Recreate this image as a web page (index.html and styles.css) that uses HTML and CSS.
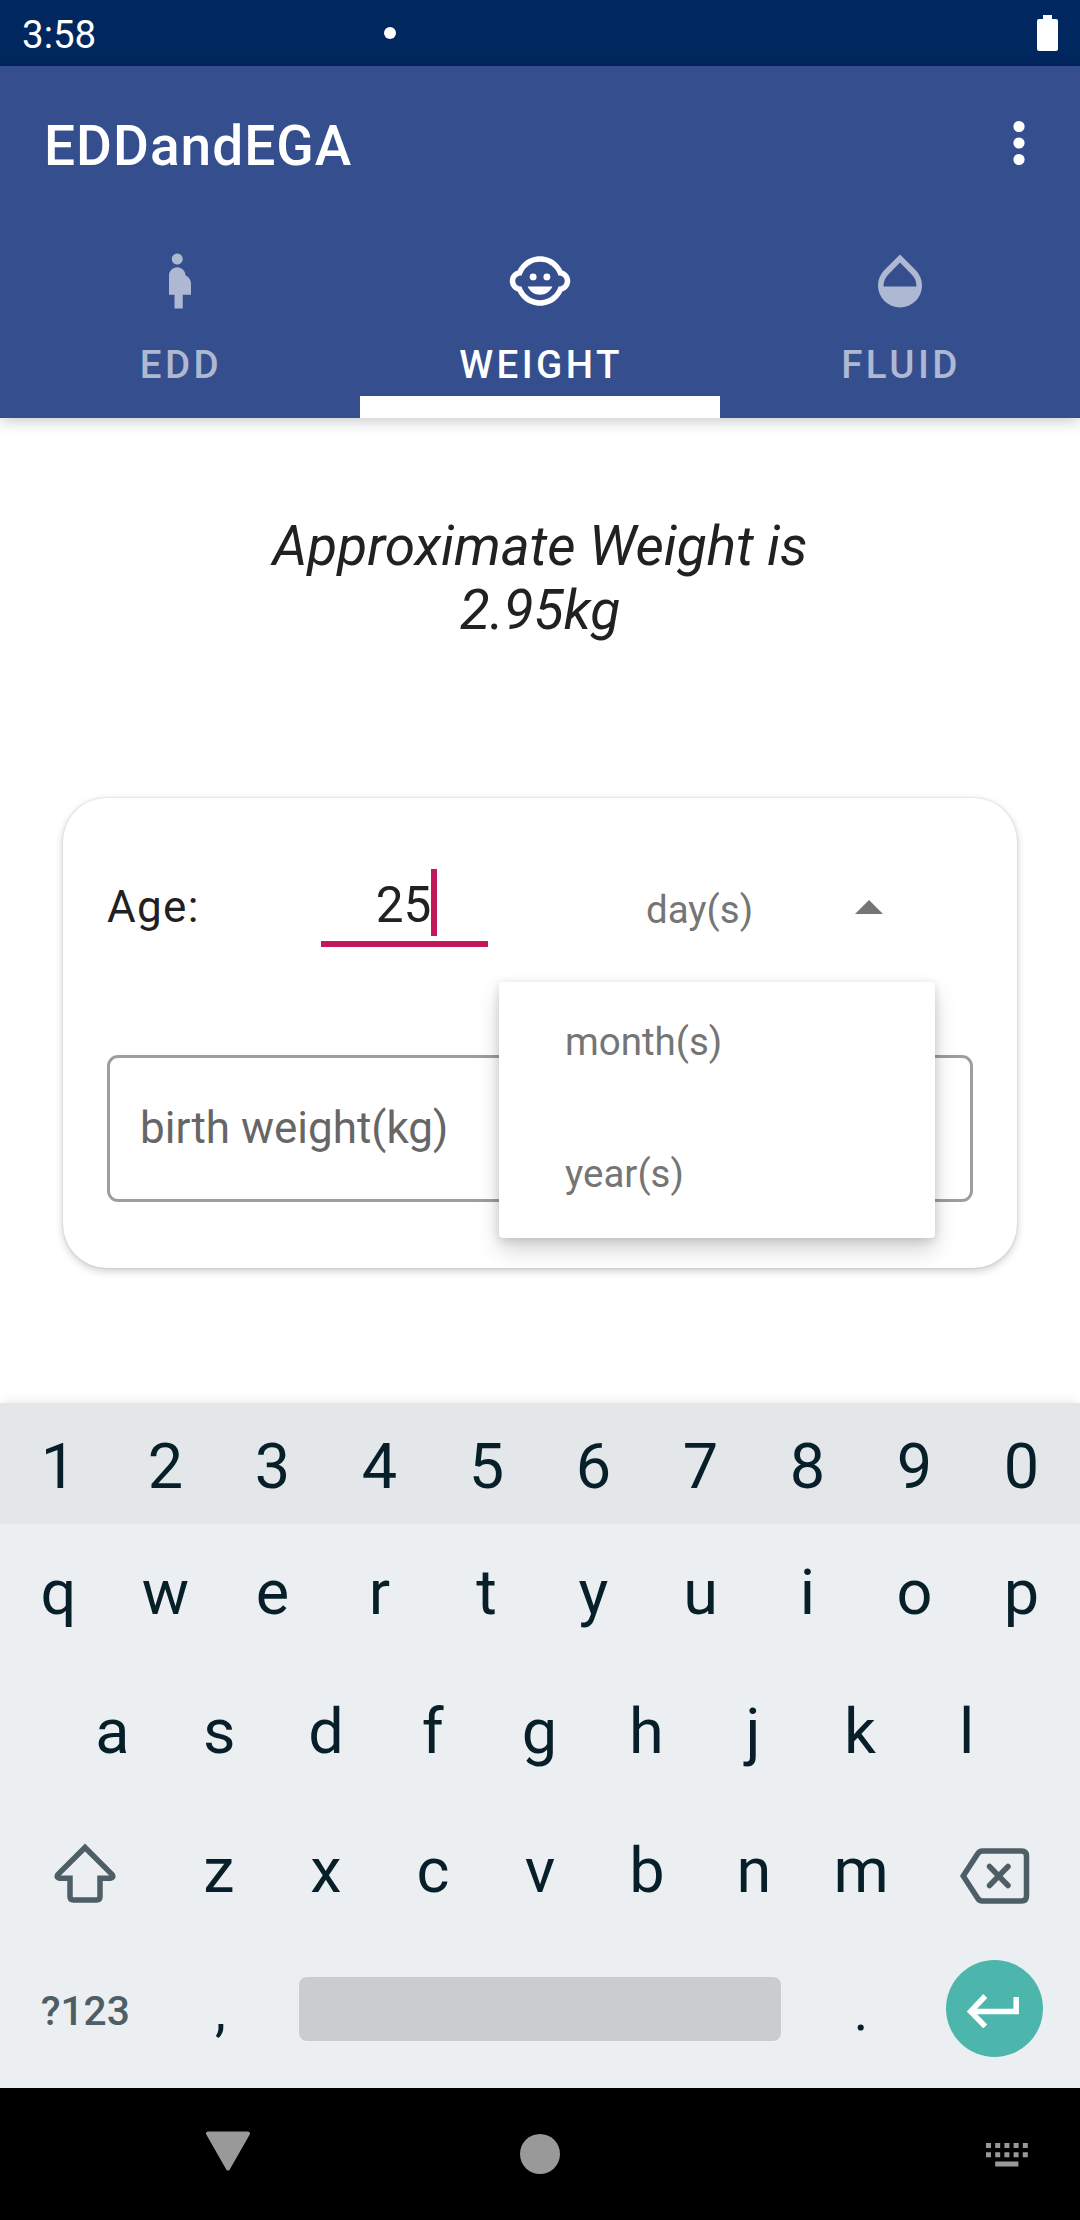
FILE: index.html
```html
<!DOCTYPE html>
<html lang="en">
<head>
<meta charset="utf-8">
<title>EDDandEGA</title>
<link rel="stylesheet" href="styles.css">
</head>
<body>
<div class="screen">
  <div class="status-bar">
    <span class="clock">3:58</span>
    <span class="status-dot"></span>
    <svg class="battery" width="21" height="36" viewBox="0 0 21 36"><path d="M6 0h9v4h4q2 0 2 2v28q0 2-2 2H2q-2 0-2-2V6q0-2 2-2h4z"/></svg>
  </div>

  <header class="app-header">
    <div class="toolbar">
      <h1 class="title">EDDandEGA</h1>
      <svg class="overflow" width="12" height="46" viewBox="0 0 12 46"><circle cx="6" cy="6.5" r="5.6"/><circle cx="6" cy="23" r="5.6"/><circle cx="6" cy="39.5" r="5.6"/></svg>
    </div>
    <nav class="tabs">
      <div class="tab">
        <svg class="tab-icon" viewBox="0 0 24 24"><path d="M9 4c0-1.11.89-2 2-2s2 .89 2 2-.89 2-2 2-2-.89-2-2zM16 13c-.01-1.34-.83-2.51-2-3 0-1.66-1.34-3-3-3s-3 1.34-3 3v7h2v5h3v-5h3v-4z"/></svg>
        <span class="tab-label">EDD</span>
      </div>
      <div class="tab tab-active">
        <svg class="tab-icon" viewBox="0 0 24 24"><circle cx="14.5" cy="10.5" r="1.25"/><circle cx="9.5" cy="10.5" r="1.25"/><path d="M22.94 12.66c.04-.21.06-.43.06-.66s-.02-.45-.06-.66c-.25-1.51-1.36-2.74-2.81-3.17-.53-1.12-1.28-2.1-2.19-2.91C16.36 3.85 14.28 3 12 3s-4.36.85-5.94 2.26c-.92.81-1.67 1.8-2.19 2.91-1.45.43-2.56 1.65-2.81 3.17-.04.21-.06.43-.06.66s.02.45.06.66c.25 1.51 1.36 2.74 2.81 3.17.52 1.11 1.27 2.09 2.17 2.89C7.62 20.14 9.71 21 12 21s4.38-.86 5.97-2.28c.9-.8 1.65-1.79 2.17-2.89 1.44-.43 2.55-1.65 2.8-3.17zM19 14c-.1 0-.19-.02-.29-.03-.2.67-.49 1.29-.86 1.86C16.6 17.74 14.45 19 12 19s-4.6-1.26-5.85-3.17c-.37-.57-.66-1.19-.86-1.86-.1.01-.19.03-.29.03-1.1 0-2-.9-2-2s.9-2 2-2c.1 0 .19.02.29.03.2-.67.49-1.29.86-1.86C7.4 6.26 9.55 5 12 5s4.6 1.26 5.85 3.17c.37.57.66 1.19.86 1.86.1-.01.19-.03.29-.03 1.1 0 2 .9 2 2s-.9 2-2 2zM7.5 14c.76 1.77 2.49 3 4.5 3s3.74-1.23 4.5-3h-9z"/></svg>
        <span class="tab-label">WEIGHT</span>
      </div>
      <div class="tab">
        <svg class="tab-icon" viewBox="0 0 24 24"><path d="M17.66 8L12 2.35 6.34 8C4.78 9.56 4 11.64 4 13.64s.78 4.11 2.34 5.67 3.61 2.35 5.66 2.35 4.1-.79 5.66-2.35S20 15.64 20 13.64 19.22 9.56 17.66 8zM6 14c.01-2 .62-3.27 1.76-4.4L12 5.27l4.24 4.38C17.38 10.77 17.99 12 18 14H6z"/></svg>
        <span class="tab-label">FLUID</span>
      </div>
    </nav>
  </header>

  <main class="content">
    <p class="result">Approximate Weight is<br>2.95kg</p>
    <section class="card">
      <div class="age-row">
        <span class="age-label">Age:</span>
        <div class="age-input">25<span class="caret"></span></div>
        <span class="unit">day(s)</span>
        <svg class="arrow" width="28" height="14" viewBox="0 0 28 14"><path d="M0 14L14 0l14 14z"/></svg>
      </div>
      <div class="field">birth weight(kg)</div>
      <div class="menu">
        <div class="menu-item">month(s)</div>
        <div class="menu-item">year(s)</div>
      </div>
    </section>
  </main>

  <div class="keyboard">
    <div class="keys keys-numbers"><span>1</span><span>2</span><span>3</span><span>4</span><span>5</span><span>6</span><span>7</span><span>8</span><span>9</span><span>0</span></div>
    <div class="keys"><span>q</span><span>w</span><span>e</span><span>r</span><span>t</span><span>y</span><span>u</span><span>i</span><span>o</span><span>p</span></div>
    <div class="keys keys-home"><span>a</span><span>s</span><span>d</span><span>f</span><span>g</span><span>h</span><span>j</span><span>k</span><span>l</span></div>
    <div class="keys">
      <span class="key-side"><svg class="shift" width="62" height="62" viewBox="0 0 62 62"><path d="M31 4.5L3.8 31.6Q2 35 5.5 35.3H16V53.500q0 3.500 3.500 3.500h23q3.500 0 3.500-3.500V35.300H56.500Q60 35 58.200 31.600z"/></svg></span>
      <span>z</span><span>x</span><span>c</span><span>v</span><span>b</span><span>n</span><span>m</span>
      <span class="key-side"><svg class="backspace" width="70" height="56" viewBox="0 0 70 56"><path d="M3.200 28L17.500 6Q19.300 3 22.500 3H61.500q5 0 5 5V48q0 5-5 5H22.500q-3.200 0-5-3zM29.500 18.500l18.500 19M48 18.500l-18.500 19"/></svg></span>
    </div>
    <div class="keys keys-bottom">
      <span class="key-side key-symbols">?123</span>
      <span class="key-punct key-comma">,</span>
      <span class="key-space"><i class="space-bar"></i></span>
      <span class="key-punct">.</span>
      <span class="key-side"><i class="enter"><svg width="52" height="34" viewBox="0 0 52 34"><path d="M49.200 3v14.500H5M18.300 2L3.500 17.500l14.800 15"/></svg></i></span>
    </div>
  </div>

  <div class="nav-bar">
    <svg class="nav-back" width="46" height="40" viewBox="0 0 46 40"><path d="M3 2.500H43L23 37.500z"/></svg>
    <span class="nav-home"></span>
    <svg class="nav-ime" width="43" height="24" viewBox="0 0 43 24"><path d="M0 0h5v5H0zM9.200 0h5v5h-5zM18.400 0h5v5h-5zM27.600 0h5v5h-5zM36.800 0h5v5h-5zM0 9.200h5v5H0zM9.200 9.200h5v5h-5zM18.400 9.200h5v5h-5zM27.600 9.200h5v5h-5zM36.800 9.200h5v5h-5zM9.200 18.400h23.200v5H9.200z"/></svg>
  </div>
</div>
</body>
</html>
```
FILE: styles.css
```css
* { box-sizing: border-box; }

body {
  margin: 0;
  font-family: Roboto, "Liberation Sans", sans-serif;
  background: #fff;
}

svg { display: block; flex: none; }

.screen {
  display: flex;
  flex-direction: column;
  width: 1080px;
  height: 2220px;
  overflow: hidden;
}

/* Status bar */
.status-bar {
  display: flex;
  align-items: center;
  height: 66px;
  padding: 0 22px;
  background: #00275e;
  color: #fff;
}
.clock { width: 362px; font-size: 38.5px; line-height: 46px; padding-top: 3px; }
.status-dot { width: 12px; height: 12px; border-radius: 50%; background: #fff; }
.battery { margin-left: auto; fill: #fff; }

/* App bar */
.app-header {
  position: relative;
  height: 352px;
  background: #354f8e;
  color: #fff;
  box-shadow: 0 3px 14px rgba(0, 0, 0, .22);
}
.toolbar {
  display: flex;
  align-items: center;
  justify-content: space-between;
  height: 154px;
  padding: 0 55px 0 44px;
}
.title {
  margin: 0;
  padding-top: 6px;
  font-size: 55px;
  line-height: 64px;
  font-weight: 500;
  letter-spacing: 1px;
}
.overflow { fill: #fff; }
.tabs { display: grid; grid-template-columns: repeat(3, 1fr); height: 198px; }
.tab {
  display: flex;
  flex-direction: column;
  align-items: center;
  padding-top: 28px;
  color: #aeb8d2;
}
.tab-active { color: #fff; border-bottom: 22px solid #fff; }
.tab-icon { width: 66px; height: 66px; fill: currentColor; }
.tab-label {
  margin-top: 28px;
  padding-left: 2px;
  font-size: 38.5px;
  line-height: 46px;
  font-weight: 500;
  letter-spacing: .0893em;
}

/* Content */
.content { height: 985px; padding: 96px 63px 0; }
.result {
  margin: 0;
  text-align: center;
  font-size: 55px;
  line-height: 64px;
  font-style: italic;
  color: #212121;
}
.card {
  position: relative;
  height: 470px;
  margin-top: 156px;
  padding: 71px 44px 0;
  border-radius: 44px;
  background: #fff;
  box-shadow: 0 3px 8px rgba(0, 0, 0, .2), 0 0 3px rgba(0, 0, 0, .12);
}
.age-row { display: flex; align-items: flex-start; height: 78px; }
.age-label { width: 214px; font-size: 44px; line-height: 76px; letter-spacing: .03em; color: #212121; }
.age-input {
  display: flex;
  justify-content: center;
  width: 167px;
  height: 78px;
  padding-right: 2px;
  border-bottom: 6px solid #c2185b;
  font-size: 49.5px;
  line-height: 72px;
  color: #212121;
}
.caret { width: 6px; height: 67px; margin-right: -6px; background: #c2185b; }
.unit { width: 209px; margin-left: 158px; font-size: 38.5px; line-height: 82px; color: #757575; }
.arrow { margin-top: 31px; fill: #757575; }
.field {
  height: 147px;
  margin-top: 108px;
  padding-left: 30px;
  border: 3px solid #9e9e9e;
  border-radius: 11px;
  font-size: 44px;
  line-height: 140px;
  color: #666;
}
.menu {
  position: absolute;
  left: 436px;
  top: 184px;
  width: 436px;
  height: 256px;
  border-radius: 4px;
  background: #fff;
  box-shadow: 0 12px 22px rgba(0, 0, 0, .17), 0 2px 10px rgba(0, 0, 0, .14);
}
.menu-item { height: 132px; padding-left: 66px; font-size: 38.5px; line-height: 120px; color: #757575; }

/* Keyboard */
.keyboard {
  height: 685px;
  background: #ebeff1;
  color: #061f28;
  font-size: 63px;
  box-shadow: 0 0 12px rgba(0, 0, 0, .1);
}
.keys { display: flex; align-items: center; height: 138.7px; padding: 0 5px; line-height: 74px; }
.keys > span { flex: 1; display: flex; justify-content: center; }
.keys-numbers { height: 121px; padding-top: 6px; background: #e4e7e9; }
.keys-home { padding: 0 60px 0 59px; }
.keys > .key-side { flex: 0 0 160.500px; }
.shift, .backspace { fill: none; stroke: #4d5e67; stroke-width: 5.500; }
.backspace { margin-top: 10px; stroke-linecap: round; }
.shift { margin-top: 6px; }
.keys > .key-symbols { padding-top: 3px; font-size: 40.700px; font-weight: 500; color: #4d5e67; }
.keys > .key-punct { flex: 0 0 107px; padding-top: 3px; font-size: 55px; }
.keys > .key-comma { padding-left: 3px; }
.keys > .key-space { flex: 1; }
.space-bar { width: 482px; height: 64px; border-radius: 8px; background: #c9cdd0; }
.enter {
  display: flex;
  align-items: center;
  justify-content: center;
  width: 97px;
  height: 97px;
  margin-top: -1px;
  border-radius: 50%;
  background: #4db6ac;
}
.enter svg { margin: 4px 0 0 -3px; fill: none; stroke: #fff; stroke-width: 5.500; }

/* Navigation bar */
.nav-bar { position: relative; display: flex; height: 132px; padding-left: 205px; background: #000; }
.nav-back { margin-top: 43px; fill: #999; stroke: #999; stroke-width: 4; stroke-linejoin: round; }
.nav-home { width: 40px; height: 40px; margin: 46px 0 0 269px; border-radius: 50%; background: #999; }
.nav-ime { margin: 55px 0 0 426px; fill: #999; }
```
